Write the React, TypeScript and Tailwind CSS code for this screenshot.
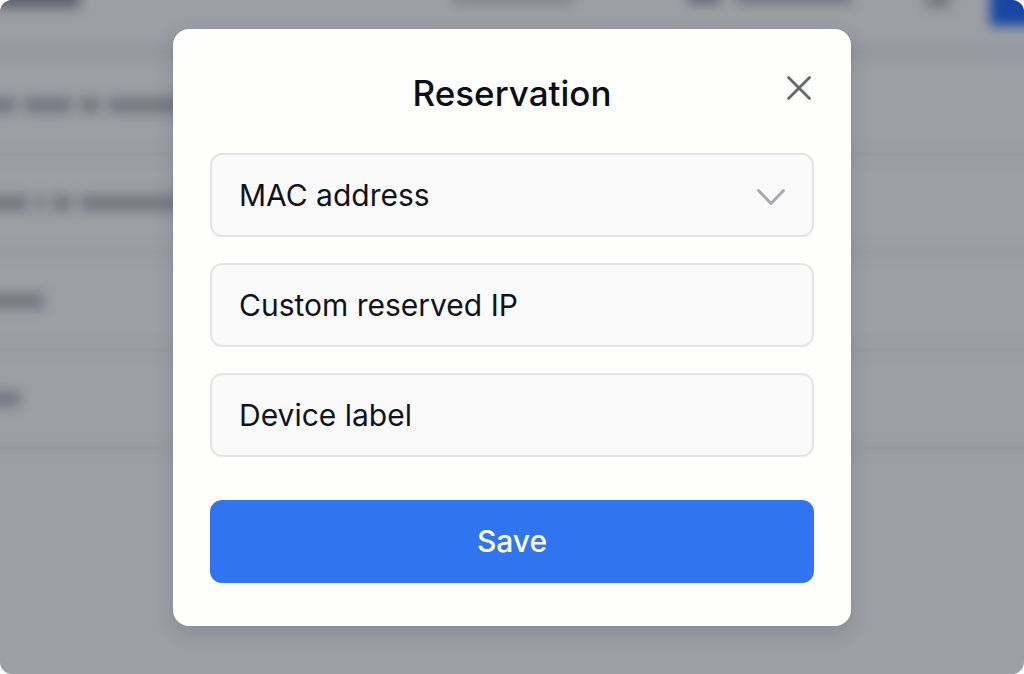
import { useState } from 'react';
import type { FormEvent } from 'react';
import { X } from 'lucide-react';
import clsx from 'clsx';

const fieldClass =
  'h-[84px] w-full rounded-xl border-2 border-[#e3e4e6] bg-[#fafafa] px-[27px] text-[30px] text-[#10131c] outline-none placeholder:text-[#10131c] placeholder:opacity-100 focus:border-[#2f74f0]';

// words of each dimmed row, by width
const rows = [
  ['w-9', 'w-12', 'w-5', 'w-24'],
  ['w-12', 'w-2', 'w-5', 'w-28'],
  ['w-16'],
  ['w-10'],
];

const PageBackdrop = () => (
  <div
    aria-hidden="true"
    className="col-start-1 row-start-1 flex flex-col overflow-hidden bg-[#9c9fa4]"
  >
    <div className="-mx-6 -mt-5 flex flex-col blur-[6px]">
      <div className="flex h-[66px] items-start">
        <div className="h-7 w-[104px] bg-[#5f646e]" />
        <div className="ml-auto flex items-start">
          <div className="mr-[115px] h-6 w-[120px] bg-[#80848c]" />
          <div className="mr-4 h-6 w-8 bg-[#666a74]" />
          <div className="mr-[75px] h-6 w-[115px] bg-[#727680]" />
          <div className="mr-10 h-7 w-6 bg-[#757981]" />
          <div className="h-[46px] w-[58px] bg-[#1747a3]" />
        </div>
      </div>
      <div className="h-3 bg-[#92969e]" />
      {rows.map((words, i) => (
        <div
          key={i}
          className="flex h-[98px] items-center gap-2 border-b-4 border-[#96999f] pl-1"
        >
          {words.map((width, j) => (
            <div key={j} className={clsx('h-4 bg-[#737882]', width)} />
          ))}
        </div>
      ))}
    </div>
  </div>
);

const App = () => {
  const [open, setOpen] = useState(true);
  const [mac, setMac] = useState('');
  const [ip, setIp] = useState('');
  const [label, setLabel] = useState('');

  const handleSubmit = (e: FormEvent) => {
    e.preventDefault();
    setOpen(false);
  };

  return (
    <div className="grid min-h-screen overflow-hidden rounded-xl bg-white font-['Inter','Liberation_Sans',sans-serif]">
      <PageBackdrop />

      {open && (
        <div className="relative col-start-1 row-start-1 flex items-start justify-center px-4 pt-[29px] pb-12">
          <form
            role="dialog"
            aria-labelledby="reservation-title"
            onSubmit={handleSubmit}
            className="relative flex w-full max-w-[678px] flex-col rounded-2xl bg-[#fefefc] px-[37px] pt-10 pb-[43px] shadow-[0_6px_20px_rgba(50,55,65,0.2)]"
          >
            <h1
              id="reservation-title"
              className="text-center text-[35px] leading-[48px] font-medium text-[#0b0e16]"
            >
              Reservation
            </h1>
            <button
              type="button"
              aria-label="Close"
              onClick={() => setOpen(false)}
              className="absolute top-[38px] right-[31px] cursor-pointer text-[#63666c]"
            >
              <X size={42} strokeWidth={1.6} />
            </button>

            <div className="mt-9 flex flex-col gap-[26px]">
              <div className="grid items-center">
                <select
                  aria-label="MAC address"
                  value={mac}
                  onChange={(e) => setMac(e.target.value)}
                  className={clsx(fieldClass, 'col-start-1 row-start-1 appearance-none')}
                >
                  <option value="">MAC address</option>
                </select>
                <svg
                  viewBox="0 0 30 22"
                  className="pointer-events-none col-start-1 row-start-1 mr-7 h-[22px] w-[30px] justify-self-end"
                  fill="none"
                  stroke="#a9abae"
                  strokeWidth="3"
                  strokeLinecap="round"
                  strokeLinejoin="round"
                >
                  <path d="M2.5 6.5 15 19.5 27.5 6.5" />
                </svg>
              </div>
              <input
                type="text"
                aria-label="Custom reserved IP"
                placeholder="Custom reserved IP"
                value={ip}
                onChange={(e) => setIp(e.target.value)}
                className={fieldClass}
              />
              <input
                type="text"
                aria-label="Device label"
                placeholder="Device label"
                value={label}
                onChange={(e) => setLabel(e.target.value)}
                className={fieldClass}
              />
            </div>

            <button
              type="submit"
              className="mt-[43px] h-[83px] cursor-pointer rounded-xl bg-[#3074f0] text-[30px] font-medium text-white"
            >
              Save
            </button>
          </form>
        </div>
      )}
    </div>
  );
};

export default App;
